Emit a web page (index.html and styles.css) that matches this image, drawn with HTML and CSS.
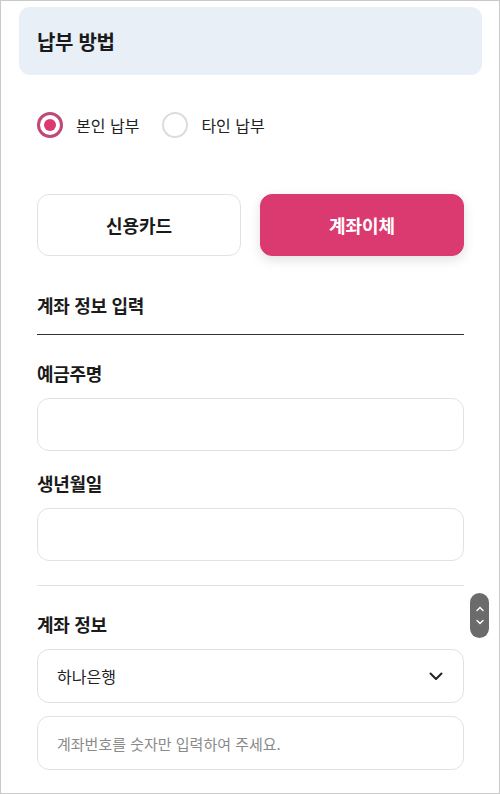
FILE: index.html
```html
<!DOCTYPE html>
<html lang="ko">
<head>
<meta charset="utf-8">
<link rel="stylesheet" href="styles.css">
</head>
<body>
<div class="frame">
  <div class="header"><h1 class="title">납부 방법</h1></div>
  <div class="content">
    <div class="radios">
      <label class="radio"><span class="dot checked"></span><span>본인 납부</span></label>
      <label class="radio"><span class="dot"></span><span>타인 납부</span></label>
    </div>
    <div class="tabs">
      <div class="tab">신용카드</div>
      <div class="tab active">계좌이체</div>
    </div>
    <h2 class="section-title">계좌 정보 입력</h2>
    <div class="field">
      <div class="label">예금주명</div>
      <div class="input"></div>
    </div>
    <div class="field">
      <div class="label">생년월일</div>
      <div class="input"></div>
    </div>
    <hr class="divider">
    <div class="field account">
      <div class="label">계좌 정보</div>
      <div class="input select"><span>하나은행</span>
        <svg width="14" height="9" viewBox="0 0 14 9"><path d="M1.5 1.5 L7 7 L12.5 1.5" fill="none" stroke="#222" stroke-width="2" stroke-linecap="round" stroke-linejoin="round"/></svg>
      </div>
      <div class="input placeholder">계좌번호를 숫자만 입력하여 주세요.</div>
    </div>
  </div>
  <div class="scroller">
    <svg width="10" height="8" viewBox="0 0 10 8"><path d="M2 5.5 L5 2.5 L8 5.5" fill="none" stroke="#fff" stroke-width="1.4" stroke-linecap="round"/></svg>
    <svg width="10" height="8" viewBox="0 0 10 8"><path d="M2 2.5 L5 5.5 L8 2.5" fill="none" stroke="#fff" stroke-width="1.4" stroke-linecap="round"/></svg>
  </div>
</div>
</body>
</html>
```
FILE: styles.css
```css
* { box-sizing: border-box; }
html, body { margin: 0; padding: 0; background: #fff; }
body { font-family: "Noto Sans CJK KR", "Noto Sans", sans-serif; color: #1c1c1c; }
.frame {
  position: relative;
  width: 500px;
  height: 794px;
  border: 1px solid #c9c9c9;
  padding: 6px 17px 0 18px;
  overflow: hidden;
}
.header {
  background: #e8eff7;
  border-radius: 11px;
  height: 68px;
  display: flex;
  align-items: center;
  padding-left: 18px;
}
.title { margin: 0; font-size: 20px; font-weight: 700; letter-spacing: -0.3px; color: #1a1a1a; }
.content { padding: 0 18px; }
.radios { display: flex; gap: 23px; margin-top: 37px; height: 26px; align-items: center; }
.radio { display: flex; align-items: center; gap: 13px; font-size: 16px; color: #222; }
.dot {
  width: 26px; height: 26px; border-radius: 50%;
  border: 2px solid #dcdcdc;
  display: flex; align-items: center; justify-content: center;
}
.dot.checked { border: 3px solid #bf4877; }
.dot.checked::after { content: ""; width: 12px; height: 12px; border-radius: 50%; background: #da3a70; }
.tabs { display: grid; grid-template-columns: 1fr 1fr; gap: 19px; margin-top: 56px; }
.tab {
  height: 62px; border-radius: 12px; border: 1px solid #e2e2e2;
  display: flex; align-items: center; justify-content: center;
  font-size: 18px; font-weight: 700; color: #1a1a1a;
}
.tab.active {
  background: #db3a70; border-color: #db3a70; color: #fff;
  box-shadow: 0 4px 12px rgba(0,0,0,0.12);
}
.section-title {
  margin: 36px 0 0; font-size: 18px; font-weight: 700; letter-spacing: -0.3px;
  padding-bottom: 16px; border-bottom: 1px solid #333; line-height: 26px;
}
.field { margin-top: 25px; }
.field + .field { margin-top: 19px; }
.label { font-size: 18px; font-weight: 700; line-height: 26px; color: #1a1a1a; margin-bottom: 12px; letter-spacing: -0.3px; }
.input {
  height: 53px; border: 1px solid #e2e2e2; border-radius: 12px;
  display: flex; align-items: center; padding: 0 20px 0 19px; font-size: 16px;
}
.divider { border: none; border-top: 1px solid #e2e2e2; margin: 24px 0 0; }
.account { margin-top: 25px; }
.account .label { margin-bottom: 12px; }
.select { height: 54px; justify-content: space-between; color: #222; }
.placeholder { margin-top: 13px; height: 54px; color: #8a8a8a; font-size: 15px; }
.scroller {
  position: absolute; left: 469px; top: 592px;
  width: 19px; height: 45px; border-radius: 10px; background: #6b6b6b;
  display: flex; flex-direction: column; align-items: center; justify-content: center; gap: 5px;
}
.scroller svg { display: block; }
```
